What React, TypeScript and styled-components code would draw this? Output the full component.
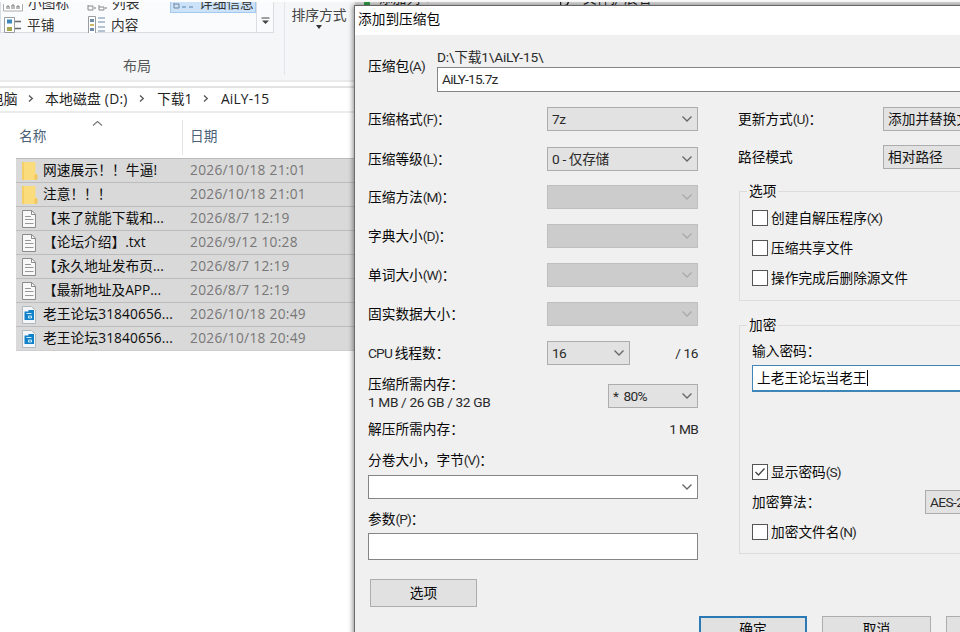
import React from 'react';
import styled, { createGlobalStyle, css } from 'styled-components';

const GlobalStyle = createGlobalStyle`
  * { box-sizing: border-box; }
  html, body { margin: 0; padding: 0; overflow: hidden; background: #fff; }
`;

const Screen = styled.div`
  position: relative;
  width: 960px;
  height: 632px;
  overflow: hidden;
  background: #fff;
  color: #080808;
  white-space: nowrap;
  font-family: 'Roboto', 'Noto Sans CJK SC', sans-serif;
`;

/* ---------- File explorer ---------- */

const Explorer = styled.div`
  width: 960px;
  height: 632px;
  display: flex;
  flex-direction: column;
  font-family: 'Open Sans', 'Noto Sans CJK SC', sans-serif;
  font-size: 13.7px;
  background: #fff;
`;

const Ribbon = styled.div`
  height: 82px;
  border-top: 2px solid #fdfdfd;
  border-bottom: 2px solid #e9eaec;
  background: #f4f6f8;
  display: flex;
  overflow: hidden;
`;

const LayoutGroup = styled.div`
  width: 285px;
  height: 73px;
  border-right: 1px solid #e3e5e8;
  display: flex;
  flex-direction: column;
`;

const Gallery = styled.div`
  width: 274px;
  height: 31px;
  display: flex;
  flex: none;
  background: #fafbfd;
  border: 1px solid #dadde2;
  border-top: 0;
`;

const GalleryItems = styled.div`
  flex: 1;
  display: grid;
  grid-template-columns: 84px 85px 86px;
  grid-template-rows: 11px 20px;
`;

const GalleryItem = styled.div<{ $active?: boolean }>`
  display: flex;
  gap: 5px;
  padding-left: 2px;
  align-items: ${p => (p.$active ? 'flex-end' : 'center')};
  height: 100%;
  overflow: hidden;
  line-height: ${p => (p.$active ? 19 : 22)}px;
  padding-top: ${p => (p.$active ? 0 : 3)}px;
  color: #333;
  font-size: 13.7px;
  svg { flex: none; }
  ${p => p.$active && css`
    background: #cbe2f8;
    border: 1px solid #a3c9ee;
    border-top: 0;
  `}
`;

const CutItem = styled(GalleryItem)`
  align-items: flex-end;
  padding-bottom: 1px;
  line-height: 18px;
`;

const GalleryMore = styled.div`
  width: 17px;
  border-left: 1px solid #dadde2;
  display: flex;
  justify-content: center;
  align-items: flex-end;
  padding-bottom: 7px;
`;

const GroupCaption = styled.div`
  height: 42px;
  padding: 22px 0 0 123px;
  line-height: 22px;
  color: #555;
  font-size: 14px;
`;

const SortGroup = styled.div`
  width: 70px;
  display: flex;
  flex-direction: column;
  align-items: center;
  line-height: 18px;
  padding: 4px 2px 0 0;
  color: #444;
  font-size: 13.8px;
  svg { margin-top: 1px; }
`;

const RibbonTools = styled.div`
  flex: 1;
  height: 12px;
  padding-left: 9px;
  display: flex;
  align-items: flex-end;
  margin-top: -7px;
  color: #222;
  line-height: 19px;
  background: #dcdcdc;
  svg { flex: none; margin-right: 9px; }
`;

const RibbonTool = styled.div<{ $w: number }>`
  width: ${p => p.$w}px;
  display: flex;
  align-items: flex-end;
`;

const AddressBar = styled.div`
  height: 27px;
  margin-top: 4px;
  padding-bottom: 3px;
  border-top: 2px solid #e3e3e3;
  border-bottom: 2px solid #ececec;
  display: flex;
  align-items: center;
  font-size: 13.8px;
  color: #222;
`;

const Crumb = styled.span<{ $w: number; $shift?: number; $spacing?: number }>`
  width: ${p => p.$w}px;
  flex: none;
  margin-left: ${p => p.$shift ?? 0}px;
  letter-spacing: ${p => p.$spacing ?? 0}px;
`;

const CrumbArrow = styled.span<{ $w: number }>`
  width: ${p => p.$w}px;
  flex: none;
  display: flex;
  align-items: center;
`;

const ListHeader = styled.div`
  height: 45px;
  padding: 7px 0 3px 19px;
  display: flex;
  color: #4b5f76;
`;

const NameHeader = styled.div`
  width: 164px;
  border-right: 1px solid #e3e3e3;
  display: flex;
  gap: 46px;
  line-height: 32px;
  svg { flex: none; }
`;

const DateHeader = styled.div`
  padding-left: 7px;
  line-height: 32px;
`;

const FileList = styled.div`
  margin-left: 16px;
`;

const FileRow = styled.div`
  height: 24px;
  border-top: 1px solid #bcbcbc;
  background: #d9d9d9;
  display: flex;
  align-items: center;
  padding: 0 0 0 5px;
  line-height: 20px;
  color: #0c0c0c;
  &:last-child { height: 25px; padding-bottom: 0; border-bottom: 1px solid #cecece; }
  svg { flex: none; margin-right: 5px; }
`;

const FileName = styled.div<{ $spacing: number }>`
  width: 147px;
  padding-bottom: 1px;
  letter-spacing: ${p => p.$spacing}px;
`;

const FileDate = styled.div`
  color: #777;
  padding-bottom: 1px;
  letter-spacing: 0.3px;
`;

/* ---------- Dialog ---------- */

const Dialog = styled.div`
  position: absolute;
  left: 354px;
  top: 5px;
  width: 640px;
  height: 660px;
  border-top: 1px solid #666;
  border-left: 1px solid #6d6d6d;
  background: #f0f0f0;
  box-shadow: -1px 0 5px rgba(0, 0, 0, 0.45);
  font-size: 13.7px;
`;

const TitleBar = styled.div`
  height: 29px;
  background: #fff;
  padding-left: 3px;
  line-height: 27px;
`;

const ArchiveRow = styled.div`
  height: 64px;
  padding: 11px 0 0 13px;
  display: flex;
`;

const ArchiveLabel = styled.div`
  width: 69px;
  line-height: 40px;
`;

const ArchiveField = styled.div`
  flex: 1;
  line-height: 22px;
`;

const Latin = styled.span<{ $s?: number }>`
  letter-spacing: ${p => p.$s ?? -0.9}px;
  color: #2a2a2a;
`;

const TextInput = styled.div<{ $h: number; $focus?: boolean }>`
  height: ${p => p.$h}px;
  background: #fff;
  border: 1px solid #858585;
  ${p => p.$focus && css`
    border: 2px solid #3f86b8;
    border-left-width: 1px;
    border-top-width: 1px;
  `}
  padding: 0 4px;
  display: flex;
  align-items: center;
  line-height: 22px;
`;

const ArchiveInput = styled(TextInput)`
  margin-top: -1px;
  align-items: flex-start;
`;

const Columns = styled.div`
  display: flex;
  padding-left: 13px;
`;

const LeftColumn = styled.div`
  width: 330px;
  margin-right: 40px;
`;

const RightColumn = styled.div`
  flex: 1;
`;

const FieldRow = styled.div<{ $h: number; $drop?: number }>`
  height: ${p => p.$h}px;
  padding-top: ${p => p.$drop ?? 0}px;
  display: flex;
  align-items: center;
  justify-content: space-between;
  line-height: 20px;
`;

const Combo = styled.div<{ $w: number; $disabled?: boolean; $white?: boolean }>`
  width: ${p => p.$w}px;
  height: 24px;
  flex: none;
  border: 1px solid ${p => (p.$white ? '#858585' : p.$disabled ? '#bfbfbf' : '#acacac')};
  background: ${p => (p.$white ? '#fff' : p.$disabled ? '#ccc' : '#e2e2e2')};
  color: #111;
  padding: 0 4px;
  display: flex;
  align-items: center;
  justify-content: space-between;
  line-height: 22px;
  overflow: hidden;
  svg { flex: none; }
`;

const ThreadCount = styled.div`
  width: 151px;
  display: flex;
  align-items: center;
  justify-content: space-between;
`;

const MemoryLabel = styled.div`
  line-height: 18px;
  padding-bottom: 6px;
`;

const RightRow = styled(FieldRow)`
  justify-content: flex-start;
`;

const RightLabel = styled.div<{ $w: number }>`
  width: ${p => p.$w}px;
  flex: none;
`;

const Group = styled.fieldset<{ $h: number; $mt: number }>`
  height: ${p => p.$h}px;
  margin: ${p => p.$mt}px 0 0 1px;
  padding: 0 0 0 12px;
  border: 1px solid #dcdcdc;
  min-width: 0;
`;

const Legend = styled.legend`
  margin-left: -5px;
  padding: 0 2px;
  line-height: 20px;
  height: 20px;
`;

const CheckRow = styled.div<{ $h: number }>`
  height: ${p => p.$h}px;
  display: flex;
  align-items: center;
  gap: 3px;
  line-height: 20px;
`;

const CheckBox = styled.div`
  width: 16px;
  height: 16px;
  flex: none;
  border: 1px solid #555;
  background: #fff;
  display: flex;
`;

const PasswordInput = styled(TextInput)`
  margin: -2px 0 65px;
`;

const Caret = styled.span`
  width: 1px;
  height: 16px;
  background: #000;
`;

const Footer = styled.div`
  display: flex;
  gap: 15px;
  padding-left: 344px;
  margin-top: 9px;
`;

const Button = styled.div<{ $w: number; $primary?: boolean }>`
  width: ${p => p.$w}px;
  height: 28px;
  flex: none;
  border: ${p => (p.$primary ? '2px solid #2b7ab5' : '1px solid #adadad')};
  background: #e1e1e1;
  text-align: center;
  line-height: ${p => (p.$primary ? 22 : 24)}px;
`;

const OptionsButton = styled(Button)`
  margin: 19px 0 0 2px;
  line-height: 26px;
`;

/* ---------- Icons ---------- */

const Chevron = ({ faint }: { faint?: boolean }) => (
  <svg width="12" height="8" viewBox="0 0 12 8">
    <path d="M1.5 1.5 6 6l4.5-4.5" fill="none" stroke={faint ? '#aaa' : '#666'} strokeWidth="1.3" />
  </svg>
);

const RightChevron = () => (
  <svg width="6" height="9" viewBox="0 0 6 9">
    <path d="M1 1.5 4.3 4.5 1 7.5" fill="none" stroke="#555" strokeWidth="1.3" />
  </svg>
);

const SortMark = () => (
  <svg width="11" height="7" viewBox="0 0 11 7">
    <path d="M1 5.5 5.500 1.5 10 5.5" fill="none" stroke="#777" strokeWidth="1.1" />
  </svg>
);

const FolderIcon = () => (
  <svg width="17" height="20" viewBox="0 0 17 20">
    <path d="M1 1h13.500v11.500l2 1V17l-2 2H1z" fill="#fadc7c" />
    <path d="M13.500 13l3 1v4l-2 1h-1z" fill="#efc75f" />
    <path d="M1 1h2v18H1z" fill="#f5cf66" />
  </svg>
);

const TextIcon = () => (
  <svg width="17" height="20" viewBox="0 0 17 20">
    <path d="M1.500 1.500h9l4 3.500v13.500h-13z" fill="#f8f8f8" stroke="#8b8b8b" />
    <path d="M10.500 1.500v4h4" fill="none" stroke="#8b8b8b" />
    <path d="M4 7.500h6M4 10.500h8.500M4 14.500h8.500" stroke="#999" strokeWidth="1.200" />
  </svg>
);

const MediaIcon = () => (
  <svg width="17" height="20" viewBox="0 0 17 20">
    <path d="M1.500 1.500h9l4 3.500v13.500h-13z" fill="#f4f7fa" stroke="#b1b7bc" />
    <path d="M3.500 6.500h4v-1.500h5.500v10h-9.500z" fill="#1080c8" />
    <path d="M5.500 8.500h5M7.500 11h3v2h-3z" stroke="#c9ecff" fill="none" />
  </svg>
);

const TilesIcon = () => (
  <svg width="19" height="18" viewBox="0 0 19 18">
    <path d="M1.500 1.500h10v15h-10z" fill="#fff" stroke="#979da3" />
    <path d="M4 3.500h5v4H4z" fill="#3d87ba" />
    <path d="M4 11h5v4H4z" fill="#a4a650" />
    <path d="M12 5.500h6M12 12.500h6" stroke="#666" strokeWidth="1.300" />
  </svg>
);

const ContentIcon = () => (
  <svg width="19" height="18" viewBox="0 0 19 18">
    <path d="M1.500 .5h7v17h-7z" fill="#fff" stroke="#979da3" />
    <path d="M3 3h4v3H3zM3 12h4v3H3z" fill="#718da8" />
    <path d="M3 8h4v2H3z" fill="#cfb765" />
    <path d="M11 2h7M11 6h7M11 11h7M11 15h7" stroke="#6f8ca9" strokeWidth="1.200" />
  </svg>
);

const SmallIconsIcon = () => (
  <svg width="20" height="8" viewBox="0 0 20 8">
    <path d="M.5 0v7h19V0" fill="#fff" stroke="#aaa" />
    <path d="M4 5V2h2v3M9 5V1h2v4M14 5V2h2v3" fill="none" stroke="#777" />
  </svg>
);

const ListIcon = () => (
  <svg width="20" height="7" viewBox="0 0 20 7">
    <path d="M1 0v5h5V1h-5M12 0v5h5V2h-5" fill="none" stroke="#888" />
    <path d="M7 3h2M18 3h2" stroke="#777" />
  </svg>
);

const DetailsIcon = () => (
  <svg width="21" height="9" viewBox="0 0 21 9">
    <path d="M1 0v5h5V1H1" fill="none" stroke="#71889e" />
    <path d="M9 4h4M16 4h4" stroke="#5681a9" />
  </svg>
);

const MoreIcon = () => (
  <svg width="9" height="8" viewBox="0 0 9 8">
    <path d="M.5 1h8" stroke="#444" />
    <path d="M1 3.500h7L4.500 7z" fill="#444" />
  </svg>
);

const DownMark = () => (
  <svg width="6" height="4" viewBox="0 0 6 4">
    <path d="M0 0h6L3 4z" fill="#333" />
  </svg>
);

const AddMark = () => (
  <svg width="6" height="12" viewBox="0 0 6 12">
    <path d="M0 4h6v8H0z" fill="#2f9b45" />
  </svg>
);

const TickMark = () => (
  <svg width="14" height="12" viewBox="0 0 14 12">
    <path d="M.5 0v12M4 11l3-1 4-8" fill="none" stroke="#222" strokeWidth="1.500" />
  </svg>
);

const CheckMark = () => (
  <svg width="14" height="14" viewBox="0 0 14 14">
    <path d="M2.500 7 5.500 10 11.500 3.500" fill="none" stroke="#444" strokeWidth="1.300" />
  </svg>
);

/* ---------- Data ---------- */

const files = [
  { icon: 'folder', name: '网速展示！！牛逼!', date: '2026/10/18 21:01', spacing: 0.12 },
  { icon: 'folder', name: '注意！！！', date: '2026/10/18 21:01', spacing: 0 },
  { icon: 'text', name: '【来了就能下载和...', date: '2026/8/7 12:19', spacing: 0.05 },
  { icon: 'text', name: '【论坛介绍】.txt', date: '2026/9/12 10:28', spacing: 0 },
  { icon: 'text', name: '【永久地址发布页...', date: '2026/8/7 12:19', spacing: 0.05 },
  { icon: 'text', name: '【最新地址及APP...', date: '2026/8/7 12:19', spacing: 0 },
  { icon: 'media', name: '老王论坛31840656...', date: '2026/10/18 20:49', spacing: 0.12 },
  { icon: 'media', name: '老王论坛31840656...', date: '2026/10/18 20:49', spacing: 0.12 },
];

const fileIcons: Record<string, React.ReactNode> = {
  folder: <FolderIcon />,
  text: <TextIcon />,
  media: <MediaIcon />,
};

const settings = [
  { label: '压缩格式', key: '(F)', value: '7z', h: 40 },
  { label: '压缩等级', key: '(L)', value: '0 - 仅存储', h: 39 },
  { label: '压缩方法', key: '(M)', disabled: true, h: 38 },
  { label: '字典大小', key: '(D)', disabled: true, h: 39 },
  { label: '单词大小', key: '(W)', disabled: true, h: 39 },
  { label: '固实数据大小', key: '', disabled: true, h: 39 },
];

function CheckItem({ h, label, hint, checked }: { h: number; label: string; hint?: string; checked?: boolean }) {
  return (
    <CheckRow $h={h}>
      <CheckBox>{checked && <CheckMark />}</CheckBox>
      <span>{label}{hint && <Latin>{hint}</Latin>}</span>
    </CheckRow>
  );
}

function ExplorerWindow() {
  return (
    <Explorer>
      <Ribbon>
        <LayoutGroup>
          <Gallery>
            <GalleryItems>
              <CutItem><SmallIconsIcon />小图标</CutItem>
              <CutItem><ListIcon />列表</CutItem>
              <GalleryItem $active><DetailsIcon />详细信息</GalleryItem>
              <GalleryItem><TilesIcon />平铺</GalleryItem>
              <GalleryItem><ContentIcon />内容</GalleryItem>
            </GalleryItems>
            <GalleryMore><MoreIcon /></GalleryMore>
          </Gallery>
          <GroupCaption>布局</GroupCaption>
        </LayoutGroup>
        <SortGroup>排序方式<DownMark /></SortGroup>
        <RibbonTools>
          <RibbonTool $w={196}><AddMark />添加列 ▾</RibbonTool>
          <RibbonTool $w={120}><TickMark />文件扩展名</RibbonTool>
        </RibbonTools>
      </Ribbon>
      <AddressBar>
        <Crumb $w={38} $shift={-10}>电脑</Crumb>
        <CrumbArrow $w={17}><RightChevron /></CrumbArrow>
        <Crumb $w={94} $spacing={0.22}>本地磁盘 (D:)</Crumb>
        <CrumbArrow $w={18}><RightChevron /></CrumbArrow>
        <Crumb $w={46}>下载1</Crumb>
        <CrumbArrow $w={18}><RightChevron /></CrumbArrow>
        <Crumb $w={60} $spacing={0.15}>AiLY-15</Crumb>
      </AddressBar>
      <ListHeader>
        <NameHeader>名称<SortMark /></NameHeader>
        <DateHeader>日期</DateHeader>
      </ListHeader>
      <FileList>
        {files.map((f, i) => (
          <FileRow key={i}>
            {fileIcons[f.icon]}
            <FileName $spacing={f.spacing}>{f.name}</FileName>
            <FileDate>{f.date}</FileDate>
          </FileRow>
        ))}
      </FileList>
    </Explorer>
  );
}

function ArchiveDialog() {
  return (
    <Dialog>
      <TitleBar>添加到压缩包</TitleBar>
      <ArchiveRow>
        <ArchiveLabel>压缩包<Latin>(A)</Latin></ArchiveLabel>
        <ArchiveField>
          <Latin $s={-0.2}>D:\下载1\AiLY-15\</Latin>
          <ArchiveInput $h={25}><Latin $s={-0.75}>AiLY-15.7z</Latin></ArchiveInput>
        </ArchiveField>
      </ArchiveRow>
      <Columns>
        <LeftColumn>
          {settings.map(s => (
            <FieldRow key={s.label} $h={s.h}>
              <span>{s.label}<Latin>{s.key}</Latin>：</span>
              <Combo $w={151} $disabled={s.disabled}>
                <Latin $s={-0.35}>{s.value}</Latin>
                <Chevron faint={s.disabled} />
              </Combo>
            </FieldRow>
          ))}
          <FieldRow $h={39}>
            <span><Latin $s={-0.8}>CPU </Latin>线程数：</span>
            <ThreadCount>
              <Combo $w={83}><Latin $s={-0.7}>16</Latin><Chevron /></Combo>
              <Latin $s={-0.4}>/ 16</Latin>
            </ThreadCount>
          </FieldRow>
          <FieldRow $h={48}>
            <MemoryLabel>
              压缩所需内存：<br />
              <Latin $s={-0.37}>1 MB / 26 GB / 32 GB</Latin>
            </MemoryLabel>
            <Combo $w={90}><Latin $s={-0.7}>*&nbsp; 80%</Latin><Chevron /></Combo>
          </FieldRow>
          <FieldRow $h={17}>
            <span>解压所需内存：</span>
            <Latin $s={-0.7}>1 MB</Latin>
          </FieldRow>
          <FieldRow $h={38} $drop={8}><span>分卷大小，字节<Latin>(V)</Latin>：</span></FieldRow>
          <Combo $w={330} $white><span /><Chevron /></Combo>
          <FieldRow $h={34} $drop={6}><span>参数<Latin>(P)</Latin>：</span></FieldRow>
          <TextInput $h={27} />
          <OptionsButton $w={107}>选项</OptionsButton>
        </LeftColumn>
        <RightColumn>
          <RightRow $h={40}>
            <RightLabel $w={145}>更新方式<Latin>(U)</Latin>：</RightLabel>
            <Combo $w={151}>添加并替换文件<Chevron /></Combo>
          </RightRow>
          <RightRow $h={36}>
            <RightLabel $w={145}>路径模式</RightLabel>
            <Combo $w={151}>相对路径<Chevron /></Combo>
          </RightRow>
          <Group $h={120} $mt={6}>
            <Legend>选项</Legend>
            <CheckItem h={34} label="创建自解压程序" hint="(X)" />
            <CheckItem h={26} label="压缩共享文件" />
            <CheckItem h={34} label="操作完成后删除源文件" />
          </Group>
          <Group $h={239} $mt={14}>
            <Legend>加密</Legend>
            <FieldRow $h={32}>输入密码：</FieldRow>
            <PasswordInput $h={27} $focus>上老王论坛当老王<Caret /></PasswordInput>
            <CheckItem h={30} label="显示密码" hint="(S)" checked />
            <RightRow $h={29}>
              <RightLabel $w={173}>加密算法：</RightLabel>
              <Combo $w={100}><Latin $s={-0.6}>AES-256</Latin><Chevron /></Combo>
            </RightRow>
            <CheckItem h={31} label="加密文件名" hint="(N)" />
          </Group>
        </RightColumn>
      </Columns>
      <Footer>
        <Button $w={108} $primary>确定</Button>
        <Button $w={109}>取消</Button>
        <Button $w={108}>帮助</Button>
      </Footer>
    </Dialog>
  );
}

export default function App() {
  return (
    <Screen>
      <GlobalStyle />
      <ExplorerWindow />
      <ArchiveDialog />
    </Screen>
  );
}
